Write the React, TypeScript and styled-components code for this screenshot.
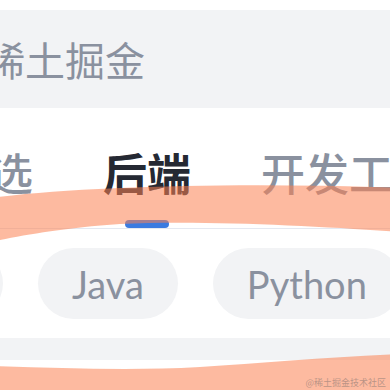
import React from "react";
import styled, { createGlobalStyle } from "styled-components";

const Global = createGlobalStyle`
  html, body { margin: 0; padding: 0; background: #ffffff; }
  body { font-family: "Noto Sans CJK SC", "Noto Sans", sans-serif; }
`;

const Page = styled.div`
  position: relative;
  width: 390px;
  height: 390px;
  overflow: hidden;
  background: #ffffff;
  padding-top: 10px;
  box-sizing: border-box;
`;

const SearchBar = styled.div`
  display: flex;
  align-items: center;
  height: 98px;
  margin: 0 -20px;
  padding-left: 5px;
  background: #f2f3f5;
`;

const SearchText = styled.span`
  font-family: "Noto Sans CJK SC", sans-serif;
  font-size: 40px;
  line-height: 1;
  color: #8a919f;
`;

const TabRow = styled.div`
  display: flex;
  gap: 70px;
  margin: 42px 0 0 -55px;
  border-bottom: 1px solid #e4e8f0;
  width: 600px;
`;

const Tab = styled.div<{ $active?: boolean }>`
  display: flex;
  flex-direction: column;
  align-items: center;
  gap: 26px;
  flex-shrink: 0;
  font-family: "Noto Sans CJK SC", sans-serif;
  font-size: 44px;
  line-height: 44px;
  font-weight: ${(p) => (p.$active ? 600 : 500)};
  color: ${(p) => (p.$active ? "#252933" : "#8a919f")};
  white-space: nowrap;
`;

const Indicator = styled.div<{ $active?: boolean }>`
  width: 44px;
  height: 8px;
  border-radius: 4px;
  background: ${(p) => (p.$active ? "#3b7be0" : "transparent")};
`;

const ChipRow = styled.div`
  display: flex;
  gap: 35px;
  margin-top: 19px;
  padding-left: 3px;
`;

const Chip = styled.div<{ $hidden?: boolean }>`
  display: flex;
  align-items: center;
  justify-content: center;
  flex-shrink: 0;
  height: 71px;
  padding: 0 34px;
  border-radius: 36px;
  background: #f2f3f5;
  font-family: Lato, "Noto Sans", sans-serif;
  font-size: 38px;
  color: #8a919f;
  white-space: nowrap;
  ${(p) => (p.$hidden ? "width: 150px; margin-left: -150px; padding: 0; box-sizing: border-box;" : "")}
`;

const Divider = styled.div`
  height: 22px;
  margin-top: 19px;
  background: #f2f3f5;
`;

const Marks = styled.svg`
  position: absolute;
  left: 0;
  top: 0;
  width: 390px;
  height: 390px;
  pointer-events: none;
`;

const Watermark = styled.div`
  position: absolute;
  right: 4px;
  bottom: 1px;
  font-family: "Noto Sans CJK SC", sans-serif;
  font-size: 9px;
  line-height: 12px;
  color: rgba(140, 120, 115, 0.6);
`;

export default function App() {
  return (
    <>
      <Global />
      <Page>
        <SearchBar>
          <SearchText>稀土掘金</SearchText>
        </SearchBar>
        <TabRow>
          <Tab>
            精选
            <Indicator />
          </Tab>
          <Tab $active>
            后端
            <Indicator $active />
          </Tab>
          <Tab>
            开发工具
            <Indicator />
          </Tab>
        </TabRow>
        <ChipRow>
          <Chip $hidden>全部</Chip>
          <Chip>Java</Chip>
          <Chip>Python</Chip>
        </ChipRow>
        <Divider />
        <Marks viewBox="0 0 390 390">
          <path
            d="M -10 198 C 80 186, 250 182, 400 188 L 400 232 C 320 226, 200 220, 120 224 C 60 228, 20 236, -10 242 Z"
            fill="rgba(251,130,82,0.55)"
          />
          <path
            d="M -10 366 C 60 368, 130 371, 200 367 C 260 363, 330 357, 400 354 L 400 400 L -10 400 Z"
            fill="rgba(251,130,82,0.55)"
          />
        </Marks>
        <Watermark>@稀土掘金技术社区</Watermark>
      </Page>
    </>
  );
}
